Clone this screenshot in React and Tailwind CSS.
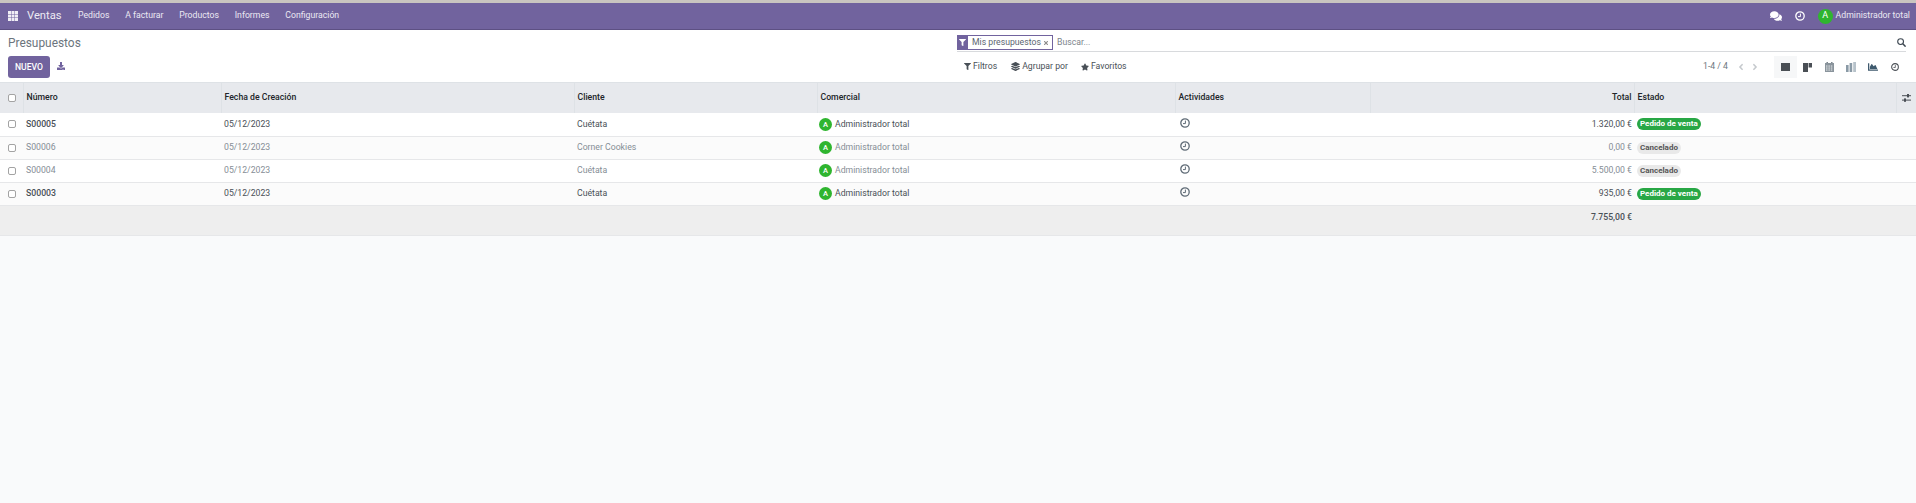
import { FaComments, FaDownload, FaFilter, FaLayerGroup, FaStar, FaAngleLeft, FaAngleRight, FaChartArea, FaTimes } from "react-icons/fa";

const menu = ["Pedidos", "A facturar", "Productos", "Informes", "Configuración"];

const rows = [
  { num: "S00005", client: "Cuétata", total: "1.320,00 €", state: "Pedido de venta", strong: true },
  { num: "S00006", client: "Corner Cookies", total: "0,00 €", state: "Cancelado", strong: false },
  { num: "S00004", client: "Cuétata", total: "5.500,00 €", state: "Cancelado", strong: false },
  { num: "S00003", client: "Cuétata", total: "935,00 €", state: "Pedido de venta", strong: true },
];

function AppsIcon() {
  return (
    <svg width="10" height="10" viewBox="0 0 10 10" fill="#f0eef5">
      {[0, 3.5, 7].map((y) =>
        [0, 3.5, 7].map((x) => <rect key={`${x}-${y}`} x={x} y={y} width="3" height="3" />)
      )}
    </svg>
  );
}

function ClockIcon({ size = 10, color = "#5f6b76" }) {
  return (
    <svg width={size} height={size} viewBox="0 0 10 10" fill="none" stroke={color} strokeWidth="1.3">
      <circle cx="5" cy="5" r="4.2" />
      <path d="M5.4 2.6 V5.6 H3" strokeWidth="1" />
    </svg>
  );
}

function SearchIcon() {
  return (
    <svg width="9" height="9" viewBox="0 0 9 9" fill="none" stroke="#3c4650" strokeWidth="1.1">
      <circle cx="3.6" cy="3.6" r="2.9" />
      <path d="M5.8 5.8 L8.6 8.6" strokeWidth="1.5" />
    </svg>
  );
}

function CalendarIcon() {
  return (
    <svg width="9" height="10" viewBox="0 0 9 10">
      <rect x="1.5" y="0" width="1.4" height="2" fill="#6f7a83" />
      <rect x="6.1" y="0" width="1.4" height="2" fill="#6f7a83" />
      <rect x="0" y="1" width="9" height="9" fill="#8a949c" />
      {[3.4, 5.4, 7.4].map((y) =>
        [1, 3.4, 5.8].map((x) => <rect key={`${x}-${y}`} x={x} y={y} width="1.5" height="1.3" fill="#d5d9dc" />)
      )}
    </svg>
  );
}

function SlidersIcon() {
  return (
    <svg width="9" height="8" viewBox="0 0 9 8" fill="#4a4f55">
      <rect x="0" y="1.2" width="9" height="1" />
      <rect x="5" y="0" width="2" height="3.4" />
      <rect x="0" y="5.6" width="9" height="1" />
      <rect x="2" y="4.4" width="2" height="3.4" />
    </svg>
  );
}

function Check() {
  return <span className="block w-[8px] h-[8px] border border-[#a3a3a3] rounded-[2px] bg-white" />;
}

function KanbanIcon() {
  return (
    <svg width="9" height="9" viewBox="0 0 9 9" fill="#4a4f55">
      <rect x="0" y="0" width="5" height="9" />
      <rect x="5.6" y="0" width="3.4" height="4.5" />
    </svg>
  );
}

function PivotIcon() {
  return (
    <svg width="10" height="10" viewBox="0 0 10 10">
      <rect x="0" y="3" width="2.6" height="7" fill="#8a9aa6" />
      <rect x="3.6" y="1" width="2.6" height="9" fill="#8a9aa6" />
      <rect x="7.2" y="0" width="2.8" height="10" fill="#b7c2ca" />
    </svg>
  );
}

function Th({ children, className = "" }) {
  return (
    <th className={`h-[30px] px-[3px] text-[8.7px] font-medium text-[#212529] border-l border-[#dee2e6] first:border-l-0 ${className}`}>
      {children}
    </th>
  );
}

export default function App() {
  return (
    <div className="min-h-[503px] bg-[#f9fafb] font-['Roboto',sans-serif] text-[8.7px] text-[#495057] whitespace-nowrap">
      <div className="h-[3px] bg-[#c9c5c0]" />

      {/* NAVBAR */}
      <nav className="h-[27px] bg-[#71639e] border-b border-[#5d5083] flex items-center pl-[8px] pr-[6px] text-[#ece9f3]">
        <AppsIcon />
        <span className="ml-[9px] text-[11.2px]">Ventas</span>
        <div className="ml-[16.5px] flex gap-[15.8px]">
          {menu.map((m) => (
            <span key={m} className="text-[8.7px]">{m}</span>
          ))}
        </div>
        <div className="ml-auto flex items-center">
          <FaComments className="text-[12px] text-white" />
          <span className="ml-[13px]"><ClockIcon size={10} color="#ffffff" /></span>
          <span className="ml-[13px] w-[15px] h-[15px] rounded-full bg-[#2fb52f] flex items-center justify-center text-[9px] text-white">A</span>
          <span className="ml-[3px] text-[8.7px]">Administrador total</span>
        </div>
      </nav>

      {/* CONTROL PANEL */}
      <div className="h-[53px] bg-white border-b border-[#dee2e6] flex pl-[8px] pr-[10px]">
        <div className="w-[949px] shrink-0">
          <div className="mt-[4px] text-[11.9px] leading-[18px] text-[#6c757d]">Presupuestos</div>
          <div className="mt-[4px] flex items-center">
            <button className="w-[42px] h-[22px] rounded-[3px] bg-[#71639e] text-white text-[8.6px] font-medium">NUEVO</button>
            <FaDownload className="ml-[7px] mb-[2px] text-[8px] text-[#71639e]" />
          </div>
        </div>
        <div className="flex-1">
          <div className="mt-[4px] h-[18px] border-b border-[#d8dadd] flex items-center">
            <span className="w-[11px] h-[15px] bg-[#71639e] flex items-center justify-center">
              <FaFilter className="text-[7px] text-white" />
            </span>
            <span className="h-[15px] w-[85px] border border-l-0 border-[#71639e] flex items-center pl-[4px] text-[8.7px] text-[#5c6670]">
              Mis presupuestos
              <FaTimes className="ml-[2px] text-[6px] text-[#8a8a8a]" />
            </span>
            <span className="ml-[4px] text-[8.7px] text-[#7c848b]">Buscar...</span>
            <span className="ml-auto"><SearchIcon /></span>
          </div>
          <div className="flex items-center mt-[4px] h-[22px]">
            <div className="ml-[7px] flex items-center gap-[14px] text-[8.7px] text-[#495057]">
              <span className="flex items-center gap-[2px]"><FaFilter className="text-[7px]" />Filtros</span>
              <span className="flex items-center gap-[2px]"><FaLayerGroup className="text-[9px]" />Agrupar por</span>
              <span className="flex items-center gap-[2px] -ml-[1px]"><FaStar className="text-[8px]" />Favoritos</span>
            </div>
            <div className="ml-auto flex items-center text-[#6c757d] text-[8.7px]">
              <span>1-4 / 4</span>
              <FaAngleLeft className="ml-[8px] text-[10px] text-[#c5c9cd]" />
              <FaAngleRight className="ml-[4px] text-[10px] text-[#c5c9cd]" />
              <div className="ml-[14px] flex items-center">
                <span className="w-[23px] h-[22px] bg-[#f6f7f8] flex items-center justify-center">
                  <span className="block w-[9px] h-[8px] bg-[#4a4f55]" />
                </span>
                <span className="w-[21px] flex justify-center"><KanbanIcon /></span>
                <span className="w-[22px] flex justify-center"><CalendarIcon /></span>
                <span className="w-[22px] flex justify-center"><PivotIcon /></span>
                <span className="w-[22px] flex justify-center"><FaChartArea className="text-[10px] text-[#3f5a6e]" /></span>
                <span className="w-[22px] flex justify-center"><ClockIcon size={8} color="#4a4f55" /></span>
              </div>
            </div>
          </div>
        </div>
      </div>

      {/* TABLE */}
      <table className="w-full table-fixed border-collapse">
        <colgroup>
          <col className="w-[23px]" />
          <col className="w-[198px]" />
          <col className="w-[353px]" />
          <col className="w-[243px]" />
          <col className="w-[358px]" />
          <col className="w-[195px]" />
          <col className="w-[264px]" />
          <col className="w-[262px]" />
          <col className="w-[20px]" />
        </colgroup>
        <thead>
          <tr className="bg-[#e7e9ed] text-left">
            <Th><span className="ml-[5px] block w-fit"><Check /></span></Th>
            <Th>Número</Th>
            <Th>Fecha de Creación</Th>
            <Th>Cliente</Th>
            <Th>Comercial</Th>
            <Th>Actividades</Th>
            <Th className="text-right !pr-[2px]">Total</Th>
            <Th>Estado</Th>
            <Th><span className="flex justify-center"><SlidersIcon /></span></Th>
          </tr>
        </thead>
        <tbody>
          {rows.map((r, i) => (
            <tr
              key={r.num}
              className={`h-[23px] border-b border-[#e6e7e9] ${i % 2 ? "bg-[#fbfbfb]" : "bg-white"} ${r.strong ? "text-[#495057]" : "text-[#868e96]"}`}
            >
              <td className="pl-[8px]"><Check /></td>
              <td className={`px-[3px] ${r.strong ? "font-medium" : ""}`}>{r.num}</td>
              <td className="px-[3px]">05/12/2023</td>
              <td className="px-[3px]">{r.client}</td>
              <td className="px-[2px]">
                <span className="flex items-center gap-[3px]">
                  <span className="w-[13px] h-[13px] rounded-full bg-[#2fb52f] text-white flex items-center justify-center text-[7.5px] font-medium">A</span>
                  Administrador total
                </span>
              </td>
              <td className="px-[5px]"><span className="block w-fit mb-[3px]"><ClockIcon /></span></td>
              <td className="pl-[3px] pr-[2px] text-right">{r.total}</td>
              <td className="px-[3px]">
                {r.state === "Pedido de venta" ? (
                  <span className="block w-fit h-[12px] leading-[12px] rounded-full bg-[#28a745] px-[3px] text-[8px] font-bold text-white">{r.state}</span>
                ) : (
                  <span className="block w-fit h-[12px] leading-[12px] rounded-full bg-[#e9e9e9] px-[3px] text-[8px] font-bold text-[#555]">{r.state}</span>
                )}
              </td>
              <td />
            </tr>
          ))}
        </tbody>
        <tfoot>
          <tr className="h-[30px] bg-[#eeeeee] border-b border-[#e6e7e9]">
            <td colSpan={6} />
            <td className="pl-[3px] pr-[2px] pb-[4px] text-right font-medium text-[#495057]">7.755,00 €</td>
            <td colSpan={2} />
          </tr>
        </tfoot>
      </table>
    </div>
  );
}
